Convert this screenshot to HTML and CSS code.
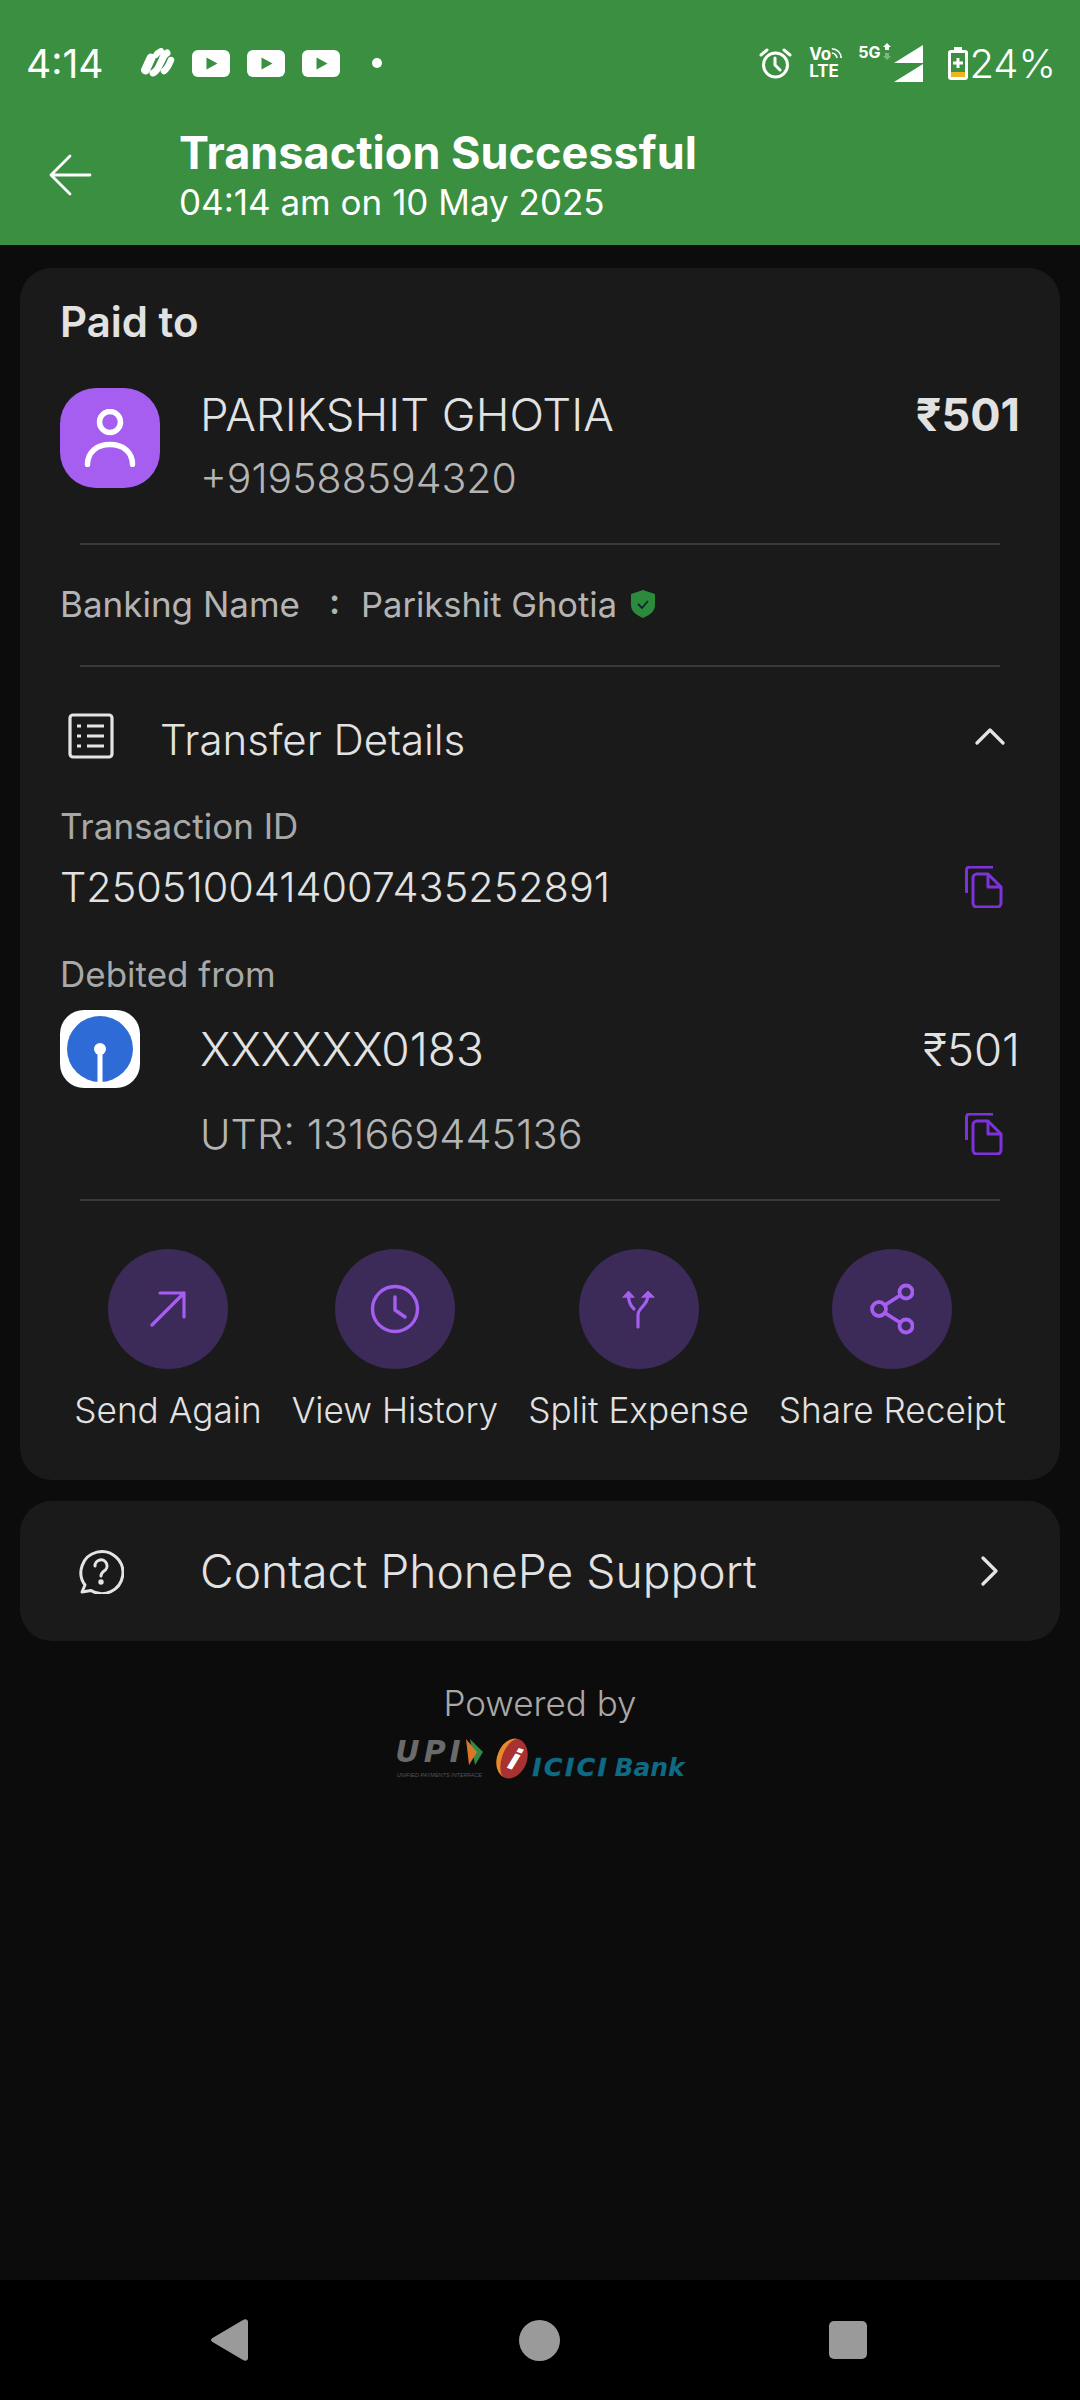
FILE: index.html
```html
<!DOCTYPE html>
<html lang="en">
<head>
<meta charset="UTF-8">
<meta name="viewport" content="width=device-width, initial-scale=1.0">
<title>Transaction Successful</title>
<link rel="stylesheet" href="styles.css">
</head>
<body>

<div class="screen">

  <!-- Green header with the phone status bar -->
  <header class="header">
    <div class="status-bar">
      <div class="status-left">
        <span class="clock">4:14</span>
        <svg class="app-icon" width="35" height="30" viewBox="0 0 35 30" fill="none" stroke="#fff" stroke-linecap="round"><path d="M5.500 22 11 10" stroke-width="9"/><path d="M13 25c5-2 6-8 9-13 1-3 3-6 5-7" stroke-width="7"/><path d="M24 23c3-2 5-6 7-11" stroke-width="6.500"/><path d="M16 7c1-2 3-3 5-4" stroke-width="6"/></svg>
        <svg class="yt-icon" width="38" height="27" viewBox="0 0 38 27"><rect width="38" height="27" rx="6" fill="#fff"/><path d="M14.500 7.500 25.500 13.500 14.500 19.500z" fill="#3a8f40"/></svg>
        <svg class="yt-icon" width="38" height="27" viewBox="0 0 38 27"><rect width="38" height="27" rx="6" fill="#fff"/><path d="M14.500 7.500 25.500 13.500 14.500 19.500z" fill="#3a8f40"/></svg>
        <svg class="yt-icon" width="38" height="27" viewBox="0 0 38 27"><rect width="38" height="27" rx="6" fill="#fff"/><path d="M14.500 7.500 25.500 13.500 14.500 19.500z" fill="#3a8f40"/></svg>
        <span class="status-dot"></span>
      </div>
      <div class="status-right">
        <svg width="33" height="32" viewBox="0 0 33 32" fill="none" stroke="#fff" stroke-width="3" stroke-linecap="round"><circle cx="16.500" cy="18" r="12"/><path d="M16 11v7l5 5M2 8l6-5M31 8l-6-5"/></svg>
        <div class="volte">
          <div class="volte-top">Vo<svg width="14" height="14" viewBox="0 0 14 14" fill="none" stroke="#fff" stroke-width="2"><path d="M1 2c6 0 11 5 11 11M1 7c3 0 6 3 6 6"/></svg></div>
          <div>LTE</div>
        </div>
        <div class="net-type">5G<svg width="8" height="17" viewBox="0 0 8 17"><path d="M4 0 8 4H6v3H2V4H0z" fill="#fff"/><path d="M4 17 0 13h2v-3h4v3h2z" fill="#fff" opacity=".35"/></svg></div>
        <svg class="signal" width="29" height="37" viewBox="0 0 29 37"><path d="M29 0v18H0zM29 19v18H0z" fill="#fff"/></svg>
        <svg class="battery" width="20" height="33" viewBox="0 0 20 33"><rect x="6" y="0" width="8" height="4" fill="#fff"/><rect x="0" y="3" width="20" height="30" rx="3" fill="#fff"/><rect x="3" y="6" width="14" height="19" fill="#3a8f40"/><rect x="3" y="25" width="14" height="5" fill="#f0b41e"/><path d="M8.500 11h3v3.500H15v3h-3.500V21h-3v-3.500H5v-3h3.500z" fill="#fff"/></svg>
        <span class="battery-text">24%</span>
      </div>
    </div>
    <div class="app-bar">
      <svg class="back-icon" width="44" height="42" viewBox="0 0 44 42" fill="none" stroke="#fff" stroke-width="2.800" stroke-linecap="round" stroke-linejoin="round"><path d="M42 21H3M22 2 3 21l19 19"/></svg>
      <div class="app-bar-text">
        <div class="title">Transaction Successful</div>
        <div class="subtitle">04:14 am on 10 May 2025</div>
      </div>
    </div>
  </header>

  <main class="content">

    <section class="card details-card">
      <h2 class="paid-to">Paid to</h2>

      <div class="payee-row">
        <div class="avatar">
          <svg width="54" height="58" viewBox="0 0 54 58" fill="none" stroke="#fff" stroke-width="5.500" stroke-linecap="round"><circle cx="27" cy="13" r="10.500"/><path d="M4.500 55.500C4.500 43 14 35.500 27 35.500S49.500 43 49.500 55.500"/></svg>
        </div>
        <div class="payee-text">
          <div class="name-line">
            <span class="payee-name">PARIKSHIT GHOTIA</span>
            <span class="amount-bold">₹501</span>
          </div>
          <div class="payee-phone">+919588594320</div>
        </div>
      </div>

      <div class="divider"></div>

      <div class="banking-row">
        <span class="banking-label">Banking Name</span>
        <span class="banking-colon">:</span>
        <span class="banking-value">Parikshit Ghotia</span>
        <svg class="shield" width="24" height="28" viewBox="0 0 24 28"><path d="M12 0 24 4v11c0 6-5 10-12 13C5 25 0 21 0 15V4z" fill="#2c8a3c"/><path d="M7 14l4 4 6-7" fill="none" stroke="#123" stroke-width="1.800"/></svg>
      </div>

      <div class="divider"></div>

      <div class="transfer-head">
        <svg class="list-icon" width="46" height="46" viewBox="0 0 46 46" fill="none" stroke="#e4e4e4" stroke-width="3.200" stroke-linejoin="round"><rect x="2" y="2" width="42" height="42" rx="3"/><path d="M19 13h17M19 23h17M19 33h17M9 13h4M9 23h4M9 33h4"/></svg>
        <span class="transfer-title">Transfer Details</span>
        <svg class="chevron-up" width="30" height="18" viewBox="0 0 30 18" fill="none" stroke="#e4e4e4" stroke-width="3.200" stroke-linecap="round" stroke-linejoin="round"><path d="M2 16 15 3l13 13"/></svg>
      </div>

      <div class="field-label">Transaction ID</div>
      <div class="id-row">
        <span class="txn-id">T2505100414007435252891</span>
        <svg class="copy-icon" width="38" height="42" viewBox="0 0 38 42" fill="none" stroke="#7e32dc" stroke-width="3" stroke-linejoin="round"><path d="M1.500 27V4a3 3 0 0 1 3-3H28"/><path d="M8 12a4 4 0 0 1 4-4h11l13 13v16a4 4 0 0 1-4 4H12a4 4 0 0 1-4-4z"/><path d="M23 8v13h13"/></svg>
      </div>

      <div class="field-label debit-label">Debited from</div>
      <div class="bank-row">
        <div class="bank-logo">
          <svg width="66" height="66" viewBox="0 0 66 66"><circle cx="33" cy="33" r="33" fill="#2f6bd6"/><circle cx="33" cy="33" r="6" fill="#fff"/><rect x="30.500" y="33" width="5" height="33" fill="#fff"/></svg>
        </div>
        <span class="account-no">XXXXXX0183</span>
        <span class="amount-light">₹501</span>
      </div>
      <div class="utr-row">
        <span class="utr">UTR: 131669445136</span>
        <svg class="copy-icon" width="38" height="42" viewBox="0 0 38 42" fill="none" stroke="#7e32dc" stroke-width="3" stroke-linejoin="round"><path d="M1.500 27V4a3 3 0 0 1 3-3H28"/><path d="M8 12a4 4 0 0 1 4-4h11l13 13v16a4 4 0 0 1-4 4H12a4 4 0 0 1-4-4z"/><path d="M23 8v13h13"/></svg>
      </div>

      <div class="divider"></div>

      <div class="actions">
        <div class="action">
          <div class="action-circle">
            <svg width="36" height="36" viewBox="0 0 36 36" fill="none" stroke="#a55ef0" stroke-width="3.200" stroke-linecap="round" stroke-linejoin="round"><path d="M2 34 34 2M10 2h24v24"/></svg>
          </div>
          <span>Send Again</span>
        </div>
        <div class="action">
          <div class="action-circle">
            <svg width="50" height="50" viewBox="0 0 50 50" fill="none" stroke="#a55ef0" stroke-width="3.400" stroke-linecap="round" stroke-linejoin="round"><circle cx="25" cy="25" r="22.500"/><path d="M25 13v13l10 7"/></svg>
          </div>
          <span>View History</span>
        </div>
        <div class="action">
          <div class="action-circle">
            <svg width="34" height="40" viewBox="0 0 34 40" fill="none" stroke="#a55ef0" stroke-width="3.200" stroke-linecap="round"><path d="M16 38V26c0-8 10-9 10-20M6.500 6c0 6 2 11 5.500 14"/><path d="M1 8l5.500-6L12 8z" fill="#a55ef0" stroke-width="1"/><path d="M20 8l6-6 6 6z" fill="#a55ef0" stroke-width="1"/></svg>
          </div>
          <span>Split Expense</span>
        </div>
        <div class="action">
          <div class="action-circle">
            <svg width="44" height="52" viewBox="0 0 44 52" fill="none" stroke="#a55ef0" stroke-width="3.800"><circle cx="36" cy="9" r="6.500"/><circle cx="9" cy="26" r="7"/><circle cx="36" cy="43" r="6.500"/><path d="M15 22 30 12.500M15 30l15 9.500"/></svg>
          </div>
          <span>Share Receipt</span>
        </div>
      </div>
    </section>

    <section class="card support-card">
      <svg class="help-icon" width="46" height="46" viewBox="0 0 46 46" fill="none" stroke="#e4e4e4" stroke-width="3"><path d="M4 44l3-7a21 21 0 1 1 6 5.500z" stroke-linejoin="round"/><path d="M17 18a6 6 0 1 1 9 5c-2 1.500-3 2.500-3 5" stroke-linecap="round"/><circle cx="23" cy="34" r="1.200" fill="#e4e4e4"/></svg>
      <span class="support-text">Contact PhonePe Support</span>
      <svg class="chevron-right" width="18" height="30" viewBox="0 0 18 30" fill="none" stroke="#e4e4e4" stroke-width="3.200" stroke-linecap="round" stroke-linejoin="round"><path d="M3 2l13 13L3 28"/></svg>
    </section>

    <footer class="powered">
      <div class="powered-text">Powered by</div>
      <div class="logos">
        <div class="upi-logo">
          <div class="upi-mark"><span class="upi-word">UPI</span><svg width="18" height="26" viewBox="0 0 18 26"><path d="M5 0 18 13 10 26z" fill="#2e8a45"/><path d="M1 0 12 13 4 26z" fill="#d9762a"/></svg></div>
          <div class="upi-sub">UNIFIED PAYMENTS INTERFACE</div>
        </div>
        <div class="icici-logo">
          <div class="icici-mark"><span>i</span></div>
          <span class="icici-word">ICICI</span>
          <span class="icici-bank">Bank</span>
        </div>
      </div>
    </footer>

  </main>

  <!-- Android navigation buttons -->
  <nav class="nav-bar">
    <svg width="38" height="42" viewBox="0 0 38 42"><path d="M1.500 19 32 1c2.500-1.500 5-.5 5 2v36c0 2.500-2.500 3.500-5 2L1.500 23c-2-1-2-3 0-4z" fill="#9a9a9a"/></svg>
    <span class="nav-home"></span>
    <span class="nav-recent"></span>
  </nav>

</div>

</body>
</html>
```

FILE: styles.css
```css
/* Global Styles */
* {
  box-sizing: border-box;
}

body {
  margin: 0;
  padding: 0;
  background-color: #0c0c0c;
  font-family: 'Inter', 'Noto Sans', sans-serif;
  color: #e2e2e2;
}

.screen {
  width: 1080px;
  height: 2400px;
  display: flex;
  flex-direction: column;
  overflow: hidden;
}

/* Header */
.header {
  height: 245px;
  background-color: #3a8f40;
  color: #fff;
}

.status-bar {
  height: 126px;
  padding: 0 24px 0 26px;
  display: flex;
  justify-content: space-between;
  align-items: center;
}

.status-left {
  display: flex;
  align-items: center;
}

.clock {
  font-size: 39px;
  font-weight: 400;
  width: 114px;
}

.yt-icon {
  margin-left: 17px;
}

.status-dot {
  width: 10px;
  height: 10px;
  border-radius: 50%;
  background-color: #fff;
  margin-left: 32px;
}

.status-right {
  display: flex;
  align-items: center;
}

.volte {
  width: 34px;
  margin-left: 17px;
  font-size: 17px;
  line-height: 17px;
  font-weight: 700;
}

.volte-top {
  display: flex;
}

.net-type {
  margin-left: 15px;
  margin-bottom: 22px;
  font-size: 16px;
  line-height: 18px;
  font-weight: 700;
  display: flex;
  gap: 3px;
}

.signal {
  margin-left: 3px;
}

.battery {
  margin-left: 25px;
}

.battery-text {
  margin-left: 1px;
  font-size: 40px;
  font-weight: 300;
}

.app-bar {
  height: 119px;
  display: flex;
  align-items: flex-start;
  padding: 0 0 0 48px;
}

.back-icon {
  margin-top: 28px;
}

.app-bar-text {
  margin-left: 87px;
}

.title {
  font-size: 45px;
  line-height: 54px;
  font-weight: 700;
}

.subtitle {
  font-size: 35px;
  line-height: 44px;
  font-weight: 400;
}

/* Cards */
.content {
  flex: 1;
  padding: 23px 20px 0;
}

.card {
  background-color: #1a1a1a;
  border-radius: 32px;
}

.details-card {
  height: 1212px;
  padding: 31px 40px 0;
}

.paid-to {
  margin: 0;
  font-size: 42px;
  line-height: 46px;
  font-weight: 600;
}

.payee-row {
  margin-top: 43px;
  display: flex;
}

.avatar {
  width: 100px;
  height: 100px;
  flex-shrink: 0;
  border-radius: 36px;
  background-color: #a55ef0;
  display: flex;
  justify-content: center;
  align-items: center;
}

.payee-text {
  flex: 1;
  margin-left: 40px;
}

.name-line {
  display: flex;
  justify-content: space-between;
  align-items: center;
  line-height: 54px;
}

.payee-name {
  font-size: 45.500px;
  font-weight: 300;
}

.amount-bold {
  font-size: 45px;
  font-weight: 700;
}

.payee-phone {
  margin-top: 12px;
  font-size: 41px;
  line-height: 48px;
  font-weight: 300;
  color: #b4b4b4;
}

.divider {
  height: 2px;
  margin: 0 20px;
  background-color: #3a3a3a;
}

.payee-row + .divider {
  margin-top: 41px;
}

.banking-row {
  height: 120px;
  padding-bottom: 2px;
  display: flex;
  align-items: center;
  font-size: 35px;
  color: #b4b4b4;
}

.banking-label {
  width: 269px;
}

.banking-colon {
  width: 32px;
  font-weight: 600;
  margin-bottom: 6px;
}

.banking-value {
  font-size: 34.500px;
}

.shield {
  margin-left: 14px;
}

.transfer-head {
  height: 120px;
  padding-top: 17px;
  display: flex;
  align-items: center;
}

.list-icon {
  margin-left: 8px;
}

.transfer-title {
  margin-left: 46px;
  padding-top: 8px;
  flex: 1;
  font-size: 42px;
  font-weight: 300;
}

.chevron-up {
  margin-right: 15px;
}

.field-label {
  margin-top: 18px;
  font-size: 35px;
  line-height: 42px;
  color: #a8a8a8;
}

.id-row {
  margin-top: 18px;
  height: 44px;
  display: flex;
  justify-content: space-between;
  align-items: center;
}

.txn-id {
  font-size: 41.400px;
  font-weight: 300;
}

.copy-icon {
  margin-right: 17px;
}

.debit-label {
  margin-top: 44px;
}

.bank-row {
  margin-top: 15px;
  display: flex;
  align-items: center;
}

.bank-logo {
  width: 80px;
  height: 78px;
  border-radius: 24px;
  background-color: #fff;
  display: flex;
  justify-content: center;
  align-items: center;
}

.account-no {
  margin-left: 60px;
  flex: 1;
  font-size: 46px;
  font-weight: 300;
}

.amount-light {
  font-size: 45.500px;
  font-weight: 300;
}

.utr-row {
  margin-top: 24px;
  padding-left: 140px;
  height: 44px;
  display: flex;
  justify-content: space-between;
  align-items: center;
}

.utr {
  font-size: 41.500px;
  font-weight: 300;
  color: #b4b4b4;
}

.utr-row + .divider {
  margin-top: 43px;
}

.actions {
  margin-top: 48px;
  display: flex;
  justify-content: center;
  gap: 30px;
}

.action {
  display: flex;
  flex-direction: column;
  align-items: center;
  font-size: 35.200px;
  font-weight: 300;
  white-space: nowrap;
}

.action-circle {
  width: 120px;
  height: 120px;
  border-radius: 50%;
  background-color: #3c2a58;
  margin-bottom: 20px;
  display: flex;
  justify-content: center;
  align-items: center;
}

.support-card {
  margin-top: 21px;
  height: 140px;
  padding: 0 62px 0 58px;
  display: flex;
  align-items: center;
}

.support-text {
  flex: 1;
  margin-left: 76px;
  font-size: 46.200px;
  font-weight: 300;
}

/* Footer logos */
.powered {
  margin-top: 40px;
  text-align: center;
}

.powered-text {
  font-size: 35px;
  line-height: 44px;
  font-weight: 300;
  color: #a8a8a8;
}

.logos {
  margin-top: 12px;
  display: flex;
  justify-content: center;
  gap: 14px;
}

.upi-logo {
  width: 88px;
}

.upi-mark {
  display: flex;
  align-items: flex-end;
  justify-content: space-between;
  height: 34px;
  padding-bottom: 6px;
}

.upi-word {
  font-family: 'DejaVu Sans', sans-serif;
  font-style: italic;
  font-weight: 700;
  font-size: 30px;
  line-height: 26px;
  letter-spacing: 4px;
  color: #6a6a6a;
}

.upi-sub {
  font-family: 'Liberation Sans', sans-serif;
  font-style: italic;
  font-size: 5.500px;
  line-height: 8px;
  white-space: nowrap;
  color: #555;
}

.icici-logo {
  display: flex;
  align-items: flex-end;
  height: 46px;
  color: #0e6a85;
  font-family: 'DejaVu Sans', sans-serif;
  font-style: italic;
  font-weight: 700;
}

.icici-mark {
  align-self: flex-start;
  width: 30px;
  height: 41px;
  margin-top: 1px;
  border-radius: 50%;
  background-color: #a83232;
  border-left: 5px solid #e88a2a;
  transform: rotate(20deg);
  color: #fff;
  font-size: 30px;
  line-height: 41px;
  text-align: center;
}

.icici-word {
  margin-left: 5px;
  font-size: 25px;
  line-height: 30px;
  letter-spacing: 2.500px;
  -webkit-text-stroke: 0.5px #0e6a85;
}

.icici-bank {
  margin-left: 5px;
  font-size: 25px;
  line-height: 30px;
}

/* Navigation */
.nav-bar {
  height: 120px;
  background-color: #000;
  padding: 0 0 0 211px;
  display: flex;
  align-items: center;
}

.nav-home {
  width: 41px;
  height: 41px;
  border-radius: 50%;
  background-color: #9a9a9a;
  margin-left: 270px;
}

.nav-recent {
  width: 38px;
  height: 38px;
  border-radius: 5px;
  background-color: #9a9a9a;
  margin-left: 269px;
}
```
